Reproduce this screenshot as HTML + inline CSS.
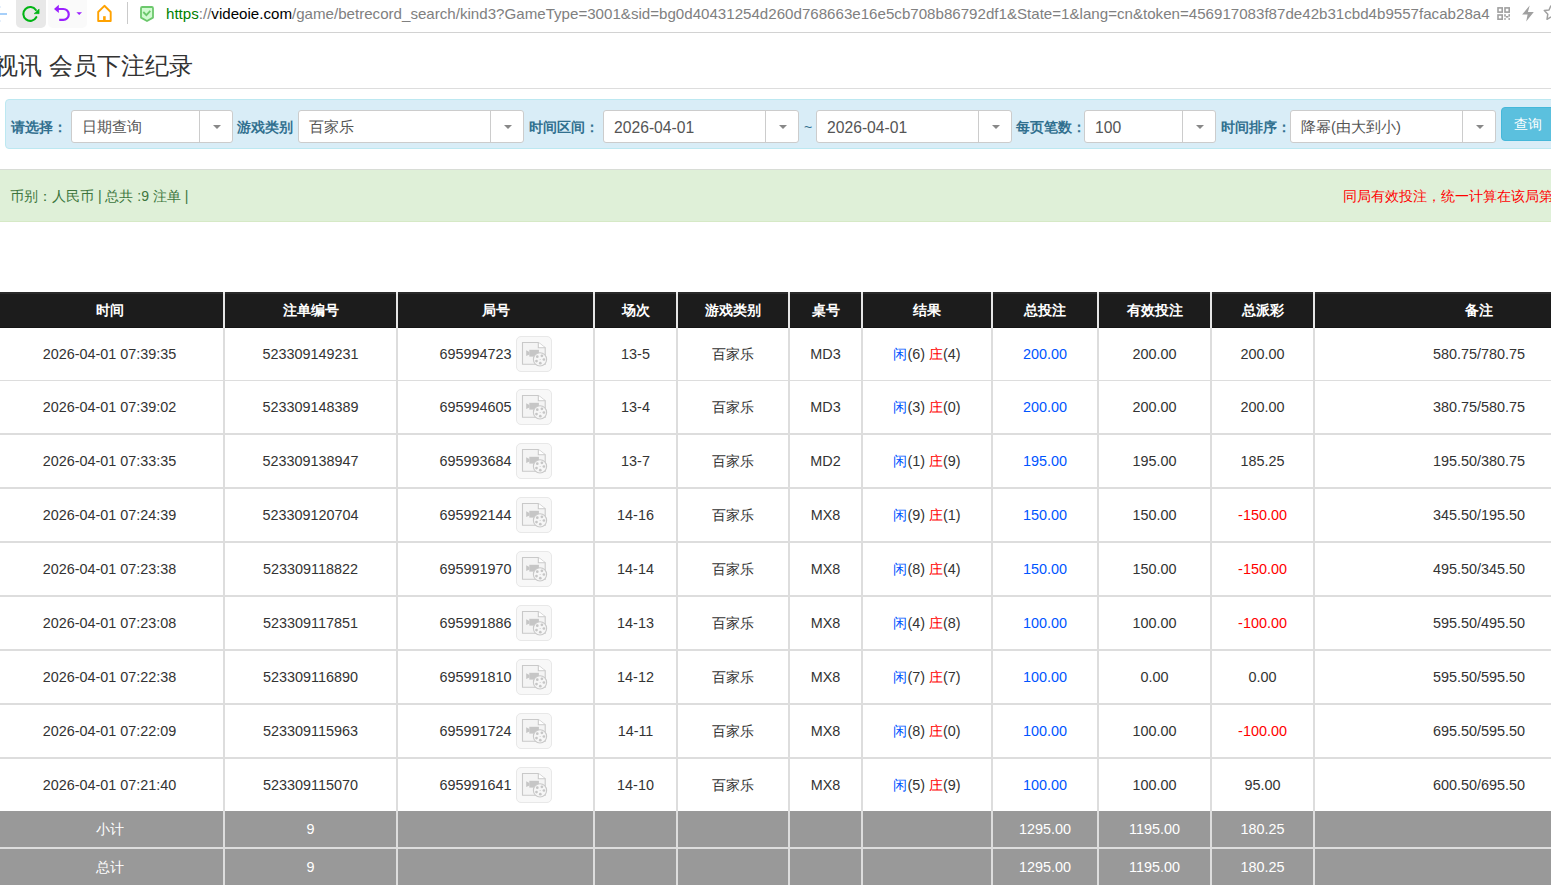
<!DOCTYPE html>
<html><head><meta charset="utf-8">
<style>
*{margin:0;padding:0;box-sizing:border-box}
html,body{width:1551px;height:885px;overflow:hidden;background:#fff;font-family:"Liberation Sans",sans-serif;color:#333;position:relative}
.abs{position:absolute}
#bar{left:0;top:0;width:1551px;height:33px;background:#fff;border-bottom:1px solid #d2d2d2}
#url{left:166px;top:5px;font-size:15.12px;line-height:18px;white-space:nowrap;color:#808080}
#url .g{color:#008000}
#url .k{color:#000}
#title{left:-6px;top:51px;font-size:24px;line-height:30px;color:#333;white-space:nowrap}
#hr{left:0;top:88px;width:1551px;height:1px;background:#ddd}
#search{left:5px;top:99px;width:1560px;height:50px;background:#d9edf7;border:1px solid #bce8f1;border-radius:4px}
.lbl{position:absolute;top:118px;font-size:14px;line-height:18px;font-weight:bold;color:#31708f;white-space:nowrap}
.sel{position:absolute;top:110px;height:33px;background:#fff;border:1px solid #ccc;border-radius:3px;font-size:15.7px;color:#555}
.sel .cj{font-size:14.8px;top:7px}
.sel span{position:absolute;left:10px;top:8px;line-height:18px;white-space:nowrap}
.sel i{position:absolute;right:0;top:0;width:33px;height:31px;border-left:1px solid #ccc}
.sel i:after{content:"";position:absolute;left:13px;top:14px;border-left:4px solid transparent;border-right:4px solid transparent;border-top:4px solid #888}
#btn{left:1501px;top:107px;width:60px;height:34px;background:#5bc0de;border:1px solid #46b8da;border-radius:4px;color:#fff;font-size:13.5px}
#alert{left:-5px;top:169px;width:1570px;height:53px;background:#dff0d8;border:1px solid #d6e9c6;border-top-color:#d8dcd6}
#al1{left:10px;top:187px;font-size:14px;line-height:18px;color:#3c763d;white-space:nowrap}
#al2{left:1343px;top:187px;font-size:14px;line-height:18px;color:#f00;white-space:nowrap}
table{position:absolute;left:-4px;top:292px;width:1647px;border-collapse:separate;border-spacing:0;table-layout:fixed;font-size:14.4px}
th{background:linear-gradient(#2a2a2a 0,#2a2a2a 2px,#1c1c1c 2px,#1c1c1c 35px,#151515 35px);color:#fff;font-weight:bold;height:36px;text-align:center;border-left:2px solid #e6e6e6;padding:0}
td{text-align:center;border-left:2px solid #ddd;border-bottom:2px solid #ddd;color:#333;padding:0;height:54px}
tr.r1 td{height:53px;border-bottom-width:1px}
tr.r9 td{height:52px;border-bottom:0}
tr.sum td{background:#999;color:#fff;height:38px}
tr.sum2 td{height:36px;border-bottom:0}
th:first-child,td:first-child{border-left:0}
.b{color:#0055ff}.r{color:#f00}
.ic{display:inline-block;width:36px;height:36px;vertical-align:middle;border:1px solid #e8e8e8;border-radius:5px;background:#f8f8f8;margin-left:4px;position:relative}
.ic svg{position:absolute;left:-1px;top:-1px}
</style></head><body>
<svg width="0" height="0" style="position:absolute"><defs><symbol id="vid" viewBox="0 0 36 36">
<path d="M6.5 6.5 H22.3 L29.2 11.8 V28.2 H6.5 Z" fill="#f4f4f4" stroke="#c9c9c9" stroke-width="1.1"/>
<path d="M22.3 6.5 V11.8 H29.2" fill="#fff" stroke="#c9c9c9" stroke-width="1.1"/>
<rect x="13.3" y="13.8" width="9.6" height="6.8" fill="#c6c6c6"/>
<path d="M10.2 14.3 L13.4 16 V18.4 L10.2 20.1 Z" fill="#c6c6c6"/>
<circle cx="24" cy="23.4" r="6.6" fill="#f6f6f6" stroke="#c9c9c9" stroke-width="1.1"/>
<g fill="#c6c6c6"><circle cx="21.3" cy="20.7" r="1.35"/><circle cx="25.9" cy="19.8" r="1.35"/><circle cx="27.9" cy="23.5" r="1.35"/><circle cx="24.3" cy="27.2" r="1.35"/><circle cx="20.5" cy="25.1" r="1.35"/><circle cx="24.1" cy="23.4" r="0.5"/></g>
</symbol></defs></svg>
<div id="bar" class="abs"></div>
<svg class="abs" style="left:0;top:0" width="1551" height="32" viewBox="0 0 1551 32">
<path d="M0 14 H7" stroke="#a6cff9" stroke-width="2"/><rect x="0" y="6" width="1" height="2" fill="#e6f0fc"/><rect x="0" y="20" width="1" height="2" fill="#e6f0fc"/>
<rect x="16" y="-4" width="30" height="32" rx="5" fill="#e8e8e8"/>
<rect x="48" y="-4" width="39" height="32" rx="5" fill="#fafafa"/>
<path d="M36.3 17.2 A6.9 6.9 0 1 1 35.9 10" fill="none" stroke="#00b414" stroke-width="2.1" stroke-linecap="round"/>
<path d="M34 13.7 L39.1 13.7 L39.1 9 Z" fill="#00b414" stroke="#00b414" stroke-width="0.5" stroke-linejoin="round"/>
<path d="M57.5 9 H63.3 A5.45 5.45 0 0 1 63.3 19.9 H59.2" fill="none" stroke="#9b20ff" stroke-width="2.2"/>
<path d="M54 9 L58.8 4.8 L58.8 13.1 Z" fill="#9b20ff"/>
<path d="M76.4 12.2 H82 L79.2 15 Z" fill="#9b20ff"/>
<path d="M98.2 21 V12 L104.4 5.8 L110.7 12 V21 Z" fill="none" stroke="#ffa200" stroke-width="1.9" stroke-linejoin="round"/>
<path d="M104.4 21 V16.2" stroke="#ffa200" stroke-width="2.6"/>
<path d="M127.5 2 V24" stroke="#cacaca" stroke-width="1"/>
<path d="M142.2 7 H151.8 Q153 7 153 8.2 V17.6 L147 21 L141 17.6 V8.2 Q141 7 142.2 7 Z" fill="#d2fbd2" stroke="#6cc86c" stroke-width="1.8" stroke-linejoin="round"/>
<path d="M143.3 12 L146.4 15.1 L150.3 10.8" fill="none" stroke="#6cc86c" stroke-width="1.8"/>
<g fill="none" stroke="#a0a0a0" stroke-width="1.6">
<rect x="1498" y="7.9" width="4.2" height="4.2"/><rect x="1505" y="7.9" width="4.2" height="4.2"/><rect x="1498" y="15" width="4.2" height="4.2"/>
</g>
<g fill="#a0a0a0"><rect x="1504.2" y="14.2" width="1.6" height="2.4"/><rect x="1508.4" y="14.2" width="1.6" height="2.4"/><rect x="1505.8" y="16" width="2.6" height="1.6"/><rect x="1504.2" y="18.2" width="1.6" height="1.6"/><rect x="1508.4" y="18.2" width="1.6" height="1.6"/></g>
<path d="M1529.7 5.5 L1522.1 14.6 H1527.6 L1526.2 21.5 L1533.8 12.1 H1527.9 Z" fill="#a0a0a0"/>
<path d="M1551 5.5 L1549 10 L1544.3 10.6 L1547.8 14.2 L1547 19.3 L1551 17" fill="none" stroke="#a0a0a0" stroke-width="1.5" stroke-linejoin="round"/>
</svg>
<div id="url" class="abs"><span class="g">https</span>://<span class="k">videoie.com</span>/game/betrecord_search/kind3?GameType=3001&amp;sid=bg0d40431254d260d768663e16e5cb708b86792df1&amp;State=1&amp;lang=cn&amp;token=456917083f87de42b31cbd4b9557facab28a4</div>
<div id="title" class="abs">视讯 会员下注纪录</div>
<div id="hr" class="abs"></div>
<div id="search" class="abs"></div>
<div class="lbl" style="left:11px">请选择：</div>
<div class="sel" style="left:71px;width:162px"><span class="cj">日期查询</span><i></i></div>
<div class="lbl" style="left:237px">游戏类别</div>
<div class="sel" style="left:298px;width:226px"><span class="cj">百家乐</span><i></i></div>
<div class="lbl" style="left:529px">时间区间：</div>
<div class="sel" style="left:603px;width:196px"><span>2026-04-01</span><i></i></div>
<div class="lbl" style="left:804px;font-weight:normal">~</div>
<div class="sel" style="left:816px;width:196px"><span>2026-04-01</span><i></i></div>
<div class="lbl" style="left:1016px">每页笔数：</div>
<div class="sel" style="left:1084px;width:132px"><span>100</span><i></i></div>
<div class="lbl" style="left:1221px">时间排序：</div>
<div class="sel" style="left:1290px;width:206px"><span class="cj">降幂(由大到小)</span><i></i></div>
<div id="btn" class="abs"><span style="position:absolute;left:12px;top:8px;line-height:18px">查询</span></div>
<div id="alert" class="abs"></div>
<div id="al1" class="abs">币别：人民币 | 总共 :9 注单 |</div>
<div id="al2" class="abs">同局有效投注，统一计算在该局第一笔注单</div>
<table>
<colgroup><col style="width:227px"><col style="width:173px"><col style="width:197px"><col style="width:83px"><col style="width:112px"><col style="width:73px"><col style="width:130px"><col style="width:106px"><col style="width:113px"><col style="width:103px"><col style="width:330px"></colgroup>
<tr><th style="border-left:0">时间</th><th>注单编号</th><th>局号</th><th>场次</th><th>游戏类别</th><th>桌号</th><th>结果</th><th>总投注</th><th>有效投注</th><th>总派彩</th><th>备注</th></tr>
<tbody id="rows">
<tr class="r1"><td>2026-04-01 07:39:35</td><td>523309149231</td><td><span style="position:relative;top:1px">695994723</span><span class="ic"><svg width="36" height="36"><use href="#vid"/></svg></span></td><td>13-5</td><td>百家乐</td><td>MD3</td><td><span class="b">闲</span>(6) <span class="r">庄</span>(4)</td><td class="b">200.00</td><td>200.00</td><td>200.00</td><td class="rm">580.75/780.75</td></tr>
<tr><td>2026-04-01 07:39:02</td><td>523309148389</td><td><span style="position:relative;top:1px">695994605</span><span class="ic"><svg width="36" height="36"><use href="#vid"/></svg></span></td><td>13-4</td><td>百家乐</td><td>MD3</td><td><span class="b">闲</span>(3) <span class="r">庄</span>(0)</td><td class="b">200.00</td><td>200.00</td><td>200.00</td><td class="rm">380.75/580.75</td></tr>
<tr><td>2026-04-01 07:33:35</td><td>523309138947</td><td><span style="position:relative;top:1px">695993684</span><span class="ic"><svg width="36" height="36"><use href="#vid"/></svg></span></td><td>13-7</td><td>百家乐</td><td>MD2</td><td><span class="b">闲</span>(1) <span class="r">庄</span>(9)</td><td class="b">195.00</td><td>195.00</td><td>185.25</td><td class="rm">195.50/380.75</td></tr>
<tr><td>2026-04-01 07:24:39</td><td>523309120704</td><td><span style="position:relative;top:1px">695992144</span><span class="ic"><svg width="36" height="36"><use href="#vid"/></svg></span></td><td>14-16</td><td>百家乐</td><td>MX8</td><td><span class="b">闲</span>(9) <span class="r">庄</span>(1)</td><td class="b">150.00</td><td>150.00</td><td class="r">-150.00</td><td class="rm">345.50/195.50</td></tr>
<tr><td>2026-04-01 07:23:38</td><td>523309118822</td><td><span style="position:relative;top:1px">695991970</span><span class="ic"><svg width="36" height="36"><use href="#vid"/></svg></span></td><td>14-14</td><td>百家乐</td><td>MX8</td><td><span class="b">闲</span>(8) <span class="r">庄</span>(4)</td><td class="b">150.00</td><td>150.00</td><td class="r">-150.00</td><td class="rm">495.50/345.50</td></tr>
<tr><td>2026-04-01 07:23:08</td><td>523309117851</td><td><span style="position:relative;top:1px">695991886</span><span class="ic"><svg width="36" height="36"><use href="#vid"/></svg></span></td><td>14-13</td><td>百家乐</td><td>MX8</td><td><span class="b">闲</span>(4) <span class="r">庄</span>(8)</td><td class="b">100.00</td><td>100.00</td><td class="r">-100.00</td><td class="rm">595.50/495.50</td></tr>
<tr><td>2026-04-01 07:22:38</td><td>523309116890</td><td><span style="position:relative;top:1px">695991810</span><span class="ic"><svg width="36" height="36"><use href="#vid"/></svg></span></td><td>14-12</td><td>百家乐</td><td>MX8</td><td><span class="b">闲</span>(7) <span class="r">庄</span>(7)</td><td class="b">100.00</td><td>0.00</td><td>0.00</td><td class="rm">595.50/595.50</td></tr>
<tr><td>2026-04-01 07:22:09</td><td>523309115963</td><td><span style="position:relative;top:1px">695991724</span><span class="ic"><svg width="36" height="36"><use href="#vid"/></svg></span></td><td>14-11</td><td>百家乐</td><td>MX8</td><td><span class="b">闲</span>(8) <span class="r">庄</span>(0)</td><td class="b">100.00</td><td>100.00</td><td class="r">-100.00</td><td class="rm">695.50/595.50</td></tr>
<tr class="r9"><td>2026-04-01 07:21:40</td><td>523309115070</td><td><span style="position:relative;top:1px">695991641</span><span class="ic"><svg width="36" height="36"><use href="#vid"/></svg></span></td><td>14-10</td><td>百家乐</td><td>MX8</td><td><span class="b">闲</span>(5) <span class="r">庄</span>(9)</td><td class="b">100.00</td><td>100.00</td><td>95.00</td><td class="rm">600.50/695.50</td></tr>
<tr class="sum"><td>小计</td><td>9</td><td></td><td></td><td></td><td></td><td></td><td>1295.00</td><td>1195.00</td><td>180.25</td><td></td></tr>
<tr class="sum sum2"><td>总计</td><td>9</td><td></td><td></td><td></td><td></td><td></td><td>1295.00</td><td>1195.00</td><td>180.25</td><td></td></tr>
</tbody>
</table>
</body></html>
